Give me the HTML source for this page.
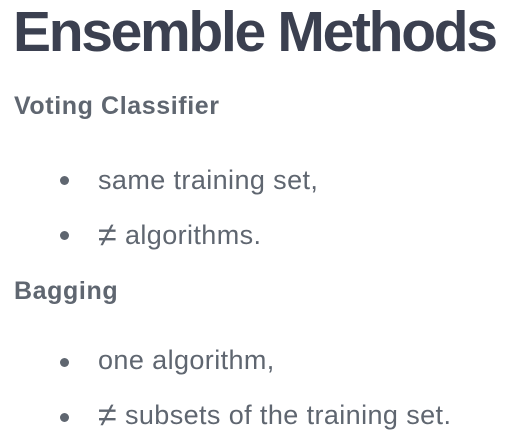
<!DOCTYPE html>
<html><head><meta charset="utf-8"><style>
body{margin:0;width:513px;height:446px;background:#fff;position:relative;overflow:hidden;font-family:"Liberation Sans",sans-serif}
div{position:absolute;line-height:1;white-space:nowrap}
.t{left:13px;font-size:57px;font-weight:bold;color:#3b4050;letter-spacing:-2.3px}
.h{left:14px;font-size:25px;font-weight:bold;color:#5f6670;letter-spacing:0.6px}
.i{left:98px;font-size:27px;color:#5f6670;letter-spacing:0.4px}
.n{font-size:34px;line-height:0;vertical-align:-2px}
.d{width:9px;height:9px;border-radius:50%;background:#5f6670;left:60px}
</style></head><body>
<div class="t" style="top:4px">Ensemble Methods</div>
<div class="h" style="top:94px">Voting Classifier</div>
<div class="d" style="top:176px"></div>
<div class="i" style="top:167px">same training set,</div>
<div class="d" style="top:231px"></div>
<div class="i" style="top:222px"><span class="n">≠</span> algorithms.</div>
<div class="h" style="top:279px">Bagging</div>
<div class="d" style="top:358px"></div>
<div class="i" style="top:347px">one algorithm,</div>
<div class="d" style="top:413px"></div>
<div class="i" style="top:402px"><span class="n">≠</span> subsets of the training set.</div>
</body></html>
